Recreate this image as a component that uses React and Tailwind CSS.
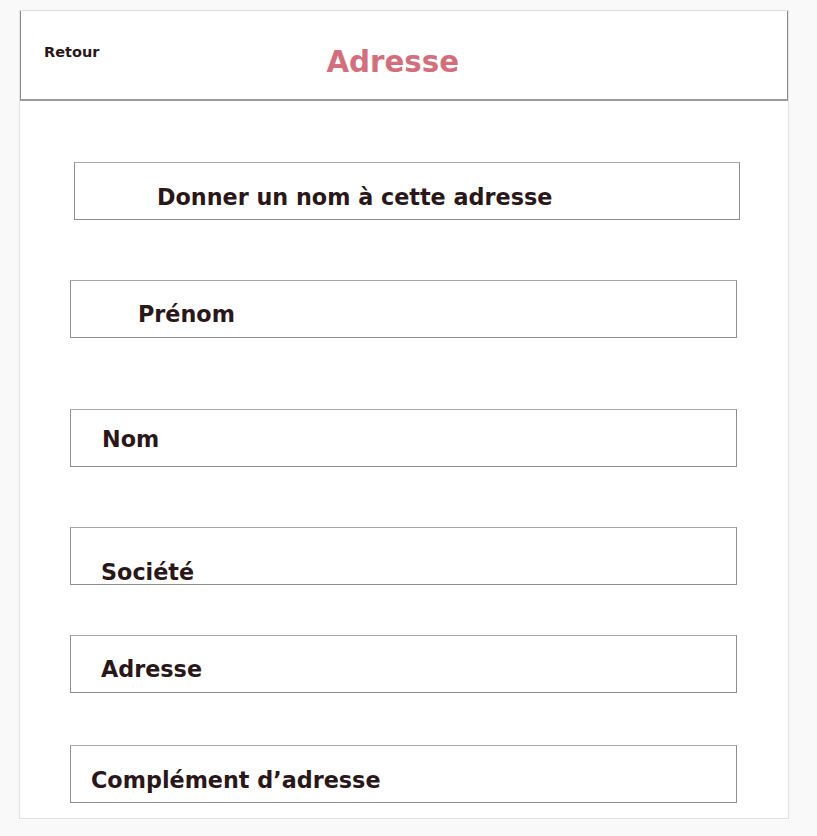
import React from 'react';

const fields = [
  { label: 'Donner un nom à cette adresse', box: 'mt-[61px] ml-[54px] w-[666px]', text: 'pt-[23px] pl-[82px]' },
  { label: 'Prénom', box: 'mt-[60px] ml-[50px] w-[667px]', text: 'pt-[22px] pl-[67px]' },
  { label: 'Nom', box: 'mt-[71px] ml-[50px] w-[667px]', text: 'pt-[18px] pl-[31px]' },
  { label: 'Société', box: 'mt-[60px] ml-[50px] w-[667px]', text: 'pt-[33px] pl-[30px]' },
  { label: 'Adresse', box: 'mt-[50px] ml-[50px] w-[667px]', text: 'pt-[22px] pl-[30px]' },
  { label: 'Complément d’adresse', box: 'mt-[52px] ml-[50px] w-[667px]', text: 'pt-[23px] pl-[20px]' },
];

const App = () => {
  return (
    <div className="min-h-[836px] bg-[#f9f9f9] pt-[10px] pl-[19px]" style={{ fontFamily: '"DejaVu Sans", Verdana, sans-serif' }}>
      <div className="w-[770px] h-[809px] bg-white border border-[#e2e2e2] border-t-[#dcdcdc]">
        <div className="h-[90px] border-x border-b-2 border-[#8c8c8c] border-b-[#9a9a9a] flex items-start">
          <span className="ml-[23px] mt-[34px] text-[14.5px] leading-[14px] font-bold text-[#2a1719]">Retour</span>
          <h1 className="ml-[227px] mt-[37px] text-[29.3px] leading-[29px] font-bold text-[#d36f7c]">Adresse</h1>
        </div>

        {fields.map((f) => (
          <div key={f.label} className={`${f.box} h-[58px] border border-[#8e8e8e] border-t-[#a8a8a8]`}>
            <p className={`${f.text} text-[22.3px] leading-[22px] font-bold text-[#2a1719]`}>{f.label}</p>
          </div>
        ))}
      </div>
    </div>
  );
};

export default App;
